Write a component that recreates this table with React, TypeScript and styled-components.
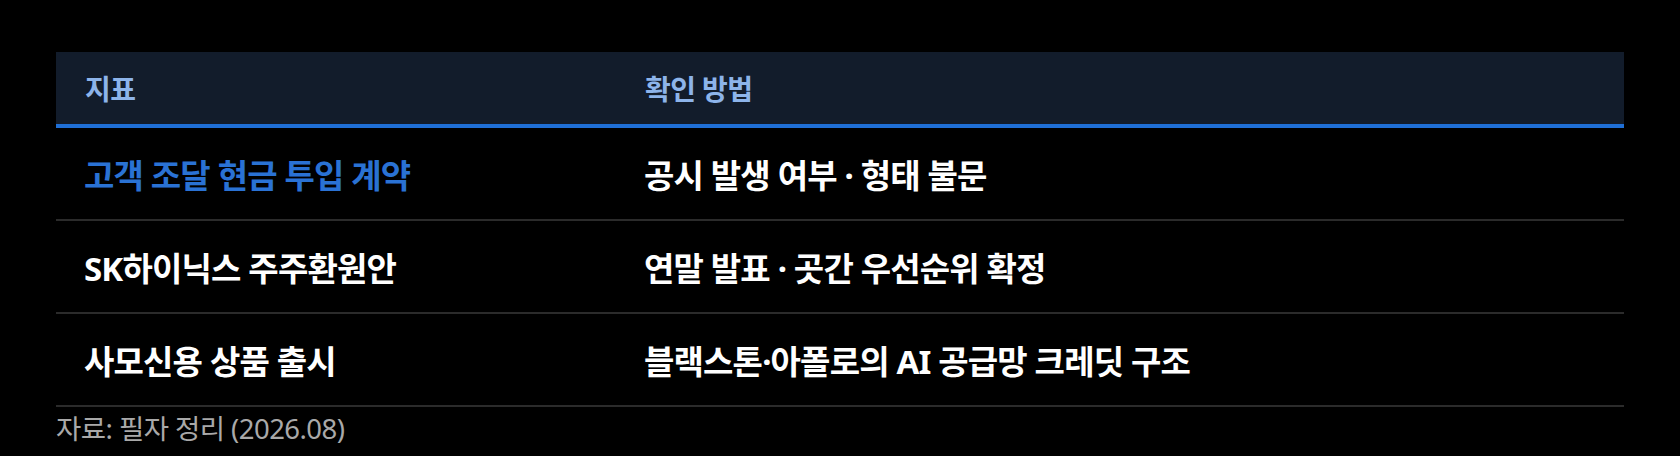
import styled, { createGlobalStyle } from "styled-components";

const GlobalStyle = createGlobalStyle`
  html, body {
    margin: 0;
    padding: 0;
    background: #000000;
  }
  body {
    font-family: "Noto Sans", "Noto Sans CJK KR", sans-serif;
  }
`;

const Page = styled.div`
  padding: 52px 56px 0 56px;
  background: #000000;
  min-height: 456px;
  box-sizing: border-box;
`;

const Table = styled.table`
  width: 100%;
  border-collapse: collapse;
  table-layout: fixed;
`;

const HeadCell = styled.th<{ $w?: number }>`
  box-sizing: border-box;
  width: ${(p) => (p.$w ? `${p.$w}px` : "auto")};
  background: #121c2b;
  color: #8db4ea;
  text-align: left;
  font-size: 28px;
  font-weight: 700;
  letter-spacing: -0.02em;
  padding: 0 28px 0 29px;
  height: 74px;
  border-bottom: 4px solid #1f6fd6;
`;

const Cell = styled.td<{ $accent?: boolean }>`
  color: ${(p) => (p.$accent ? "#2a72d4" : "#ffffff")};
  font-size: 33px;
  font-weight: 700;
  letter-spacing: -0.025em;
  padding: 0 28px;
  height: 91px;
  border-bottom: 2px solid #2b2b2b;
`;

const Note = styled.div`
  color: #a9a9a9;
  font-size: 27.5px;
  line-height: 1.4;
  letter-spacing: -0.02em;
  margin-top: 3px;
`;

const rows = [
  { metric: "고객 조달 현금 투입 계약", check: "공시 발생 여부 · 형태 불문", accent: true },
  { metric: "SK하이닉스 주주환원안", check: "연말 발표 · 곳간 우선순위 확정" },
  { metric: "사모신용 상품 출시", check: "블랙스톤·아폴로의 AI 공급망 크레딧 구조" },
];

export default function App() {
  return (
    <>
      <GlobalStyle />
      <Page>
        <Table>
          <thead>
            <tr>
              <HeadCell $w={560}>지표</HeadCell>
              <HeadCell>확인 방법</HeadCell>
            </tr>
          </thead>
          <tbody>
            {rows.map((r) => (
              <tr key={r.metric}>
                <Cell $accent={r.accent}>{r.metric}</Cell>
                <Cell>{r.check}</Cell>
              </tr>
            ))}
          </tbody>
        </Table>
        <Note>자료: 필자 정리 (2026.08)</Note>
      </Page>
    </>
  );
}
